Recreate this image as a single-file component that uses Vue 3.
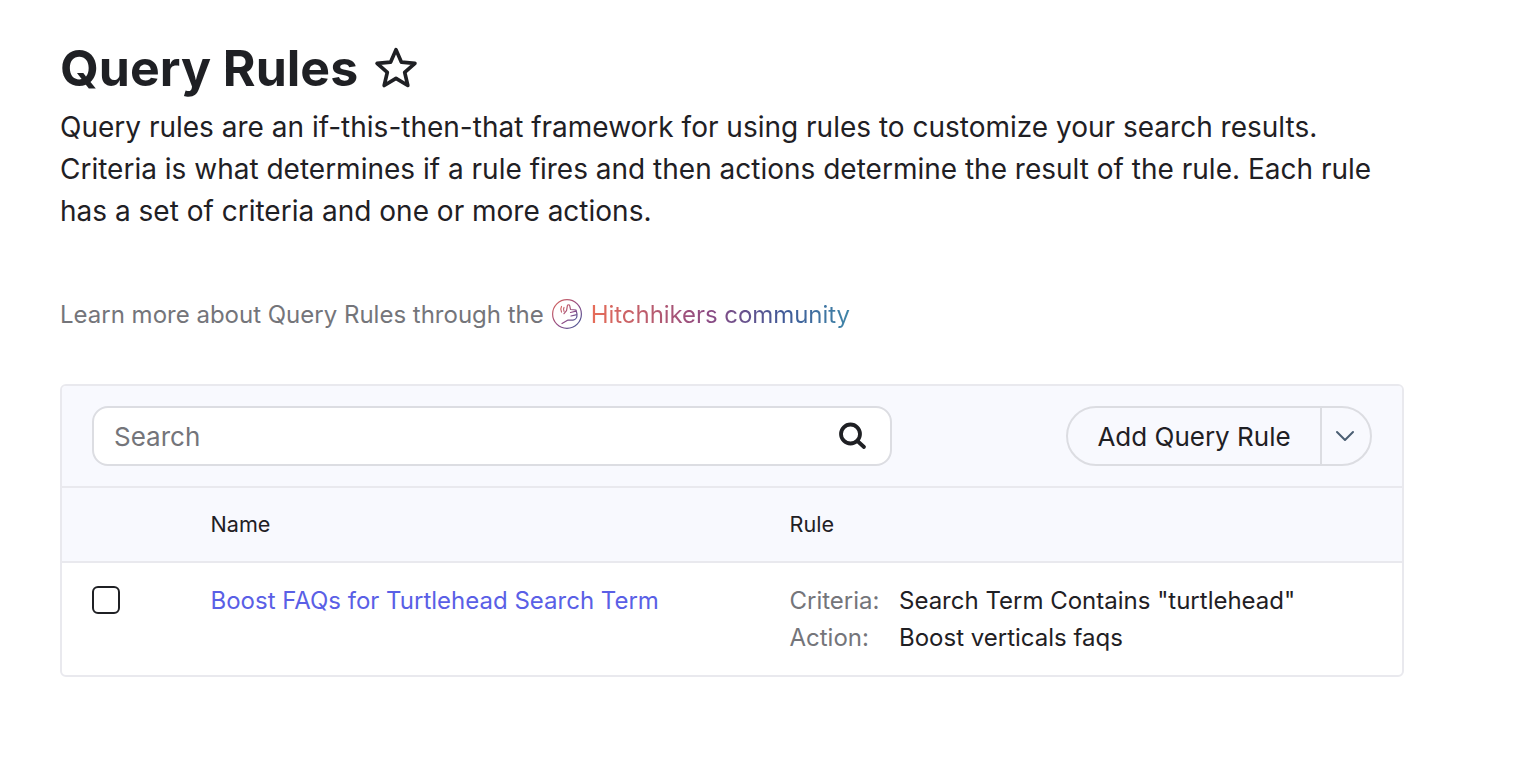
<script setup>
const rule = {
  name: 'Boost FAQs for Turtlehead Search Term',
  criteria: 'Search Term Contains "turtlehead"',
  action: 'Boost verticals faqs'
};
</script>

<template>
  <div class="page">
    <div class="title-row">
      <h1>Query Rules</h1>
      <svg class="star" width="46" height="46" viewBox="0 0 44 44" fill="none" stroke="#1f2024" stroke-width="3.500" stroke-linejoin="round">
        <path d="M22 4.500l5.200 11.900 12.900 1.200-9.800 8.500 3 12.600L22 31.900l-11.300 6.800 3-12.600-9.800-8.500 12.900-1.200z" />
      </svg>
    </div>
    <p class="intro">
      Query rules are an if-this-then-that framework for using rules to customize your search results.
      Criteria is what determines if a rule fires and then actions determine the result of the rule. Each rule
      has a set of criteria and one or more actions.
    </p>

    <div class="learn">
      <span>Learn more about Query Rules through the</span>
      <svg class="hh-icon" width="32" height="32" viewBox="0 0 32 32" fill="none">
        <defs>
          <linearGradient id="hh" x1="0" y1="0" x2="1" y2="1">
            <stop offset="0" stop-color="#e0685a" />
            <stop offset="0.55" stop-color="#8e4a86" />
            <stop offset="1" stop-color="#3f5f9c" />
          </linearGradient>
        </defs>
        <circle cx="16" cy="16" r="14.400" stroke="url(#hh)" stroke-width="1.200" />
        <path d="M11 25.500l6-3.500 5 .2c2.600-.4 4.300-3 4-6l-1-4.200-5.500-.5-.8-3.800c-.3-1.200-2-1.300-2.300 0l-.9 5-2.500 3M19.500 14.500l5.500-1.300M20 18l6-1.300M10.500 8.500c-1 1.800-1 3.800 0 5.500M13 9.500c-.7 1.300-.7 2.500 0 3.800" stroke="url(#hh)" stroke-width="1.200" stroke-linecap="round" stroke-linejoin="round" />
      </svg>
      <a class="hh-link" href="#">Hitchhikers community</a>
    </div>

    <div class="card">
      <div class="toolbar">
        <div class="search">
          <input type="text" placeholder="Search" />
          <svg width="30" height="30" viewBox="0 0 30 30" fill="none" stroke="#1f2024" stroke-width="3.800" stroke-linecap="round">
            <circle cx="12.500" cy="13" r="9.500" />
            <path d="M20 20.500l6 5.500" />
          </svg>
        </div>
        <div class="add-btn">
          <span class="add-label">Add Query Rule</span>
          <span class="add-caret">
            <svg width="20" height="12" viewBox="0 0 20 12" fill="none" stroke="#4b5f73" stroke-width="2" stroke-linecap="round" stroke-linejoin="round">
              <path d="M2 2l8 8 8-8" />
            </svg>
          </span>
        </div>
      </div>

      <div class="row head">
        <div></div>
        <div>Name</div>
        <div>Rule</div>
      </div>

      <div class="row body">
        <div><span class="check"></span></div>
        <div><a class="rule-link" href="#">{{ rule.name }}</a></div>
        <div class="details">
          <span class="key">Criteria:</span><span>{{ rule.criteria }}</span>
          <span class="key">Action:</span><span>{{ rule.action }}</span>
        </div>
      </div>
    </div>
  </div>
</template>

<style>
body {
  background: #fff;
}
</style>

<style scoped>
.page {
  width: 1344px;
  padding: 36px 0 0 60px;
  font-family: Inter, "Noto Sans", sans-serif;
  color: #1f2024;
}
.title-row {
  display: flex;
  align-items: center;
  gap: 15px;
  height: 64px;
}
h1 {
  margin: 0;
  font-size: 50px;
  line-height: 64px;
  font-weight: 700;
}
.star {
  margin-top: 0;
}
.intro {
  margin: 6px 0 0;
  width: 1330px;
  font-size: 28px;
  line-height: 42px;
}
.learn {
  display: flex;
  align-items: center;
  gap: 7.500px;
  margin-top: 64px;
  height: 36px;
  font-size: 24px;
  color: #74757a;
}
.hh-link {
  text-decoration: none;
  letter-spacing: -0.06px;
  background: linear-gradient(90deg, #e76d58 0%, #8d4a83 45%, #3f5a98 75%, #3f86a8 100%);
  -webkit-background-clip: text;
  background-clip: text;
  color: transparent;
}
.card {
  margin-top: 52px;
  border: 2px solid #e9e9ee;
  border-radius: 6px;
  overflow: hidden;
  font-size: 24px;
}
.toolbar {
  display: flex;
  justify-content: space-between;
  align-items: center;
  height: 100px;
  padding: 0 30px;
  background: #f8f9fe;
  border-bottom: 2px solid #e9e9ee;
}
.search {
  display: flex;
  align-items: center;
  width: 800px;
  height: 60px;
  box-sizing: border-box;
  padding: 0 22px 0 20px;
  background: #fff;
  border: 2px solid #dcdde2;
  border-radius: 16px;
}
.search input {
  flex: 1;
  min-width: 0;
  border: none;
  outline: none;
  padding: 0;
  background: transparent;
  font: inherit;
  font-size: 26px;
  color: #1f2024;
}
.search input::placeholder {
  color: #74757a;
  opacity: 1;
}
.add-btn {
  display: flex;
  height: 60px;
  box-sizing: border-box;
  width: 306px;
  border: 2px solid #dcdde2;
  border-radius: 30px;
  font-size: 26px;
}
.add-label {
  display: flex;
  align-items: center;
  justify-content: center;
  flex: 1;
  border-right: 2px solid #dcdde2;
}
.add-caret {
  display: flex;
  align-items: center;
  justify-content: center;
  width: 46px;
  padding-right: 2px;
}
.row {
  display: grid;
  grid-template-columns: 148.500px 579px 1fr;
}
.head {
  height: 75px;
  box-sizing: border-box;
  padding-bottom: 2px;
  align-items: center;
  font-size: 21.600px;
  background: #f8f9fe;
  border-bottom: 2px solid #e9e9ee;
}
.head > :first-child,
.body > :first-child {
  padding-left: 30px;
}
.body {
  height: 112px;
  padding-top: 20px;
  box-sizing: border-box;
  line-height: 36px;
}
.check {
  display: block;
  width: 28px;
  height: 28px;
  box-sizing: border-box;
  margin-top: 3px;
  border: 2px solid #1f2024;
  border-radius: 6px;
}
.rule-link {
  color: #5a5fe6;
  text-decoration: none;
}
.details {
  display: grid;
  grid-template-columns: 109.500px 1fr;
  grid-auto-rows: 37px;
  align-content: start;
  line-height: 36px;
}
.key {
  color: #74757a;
}
</style>
